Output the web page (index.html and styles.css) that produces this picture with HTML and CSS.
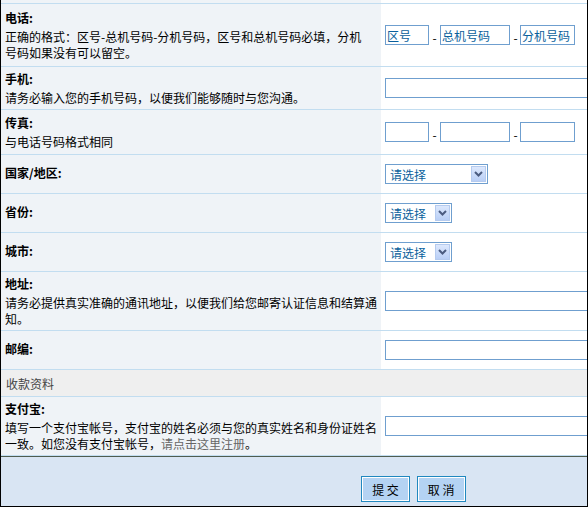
FILE: index.html
```html
<!DOCTYPE html>
<html lang="zh-CN">
<head>
  <meta charset="UTF-8">
  <title>会员资料</title>
  <link rel="stylesheet" href="styles.css">
</head>
<body>

  <div class="frame">
    <form id="profileForm">
      <table class="form-table">
        <colgroup>
          <col class="col-label">
          <col class="col-field">
        </colgroup>
        <tr class="row-cut"><td class="label"></td><td class="field"></td></tr>

        <!-- 联系方式 -->
        <tr class="h62">
          <td class="label">
            <b>电话:</b>
            <span class="tip">正确的格式：区号-总机号码-分机号码，区号和总机号码必填，分机<br>号码如果没有可以留空。</span>
          </td>
          <td class="field">
            <input class="tel-area" type="text" name="tel_area" value="区号"><span class="dash">-</span><input class="tel-main" type="text" name="tel_main" value="总机号码"><span class="dash">-</span><input class="tel-ext" type="text" name="tel_ext" value="分机号码">
          </td>
        </tr>
        <tr class="h42">
          <td class="label">
            <b>手机:</b>
            <span class="tip">请务必输入您的手机号码，以便我们能够随时与您沟通。</span>
          </td>
          <td class="field"><input class="wide" type="text" name="mobile"></td>
        </tr>
        <tr class="h44">
          <td class="label">
            <b>传真:</b>
            <span class="tip">与电话号码格式相同</span>
          </td>
          <td class="field">
            <input class="tel-area" type="text" name="fax_area"><span class="dash">-</span><input class="tel-main" type="text" name="fax_main"><span class="dash">-</span><input class="tel-ext" type="text" name="fax_ext">
          </td>
        </tr>

        <!-- 地区 -->
        <tr>
          <td class="label"><b>国家/地区:</b></td>
          <td class="field">
            <span class="pick pick-long">
              <select name="country"><option>请选择</option></select>
              <span class="pick-arrow"><svg width="9" height="6" viewBox="0 0 9 6"><path d="M1 1l3.5 3.5L8 1" fill="none" stroke="#4b5c80" stroke-width="2"/></svg></span>
            </span>
          </td>
        </tr>
        <tr>
          <td class="label"><b>省份:</b></td>
          <td class="field">
            <span class="pick">
              <select name="province"><option>请选择</option></select>
              <span class="pick-arrow"><svg width="9" height="6" viewBox="0 0 9 6"><path d="M1 1l3.5 3.5L8 1" fill="none" stroke="#4b5c80" stroke-width="2"/></svg></span>
            </span>
          </td>
        </tr>
        <tr>
          <td class="label"><b>城市:</b></td>
          <td class="field">
            <span class="pick">
              <select name="city"><option>请选择</option></select>
              <span class="pick-arrow"><svg width="9" height="6" viewBox="0 0 9 6"><path d="M1 1l3.5 3.5L8 1" fill="none" stroke="#4b5c80" stroke-width="2"/></svg></span>
            </span>
          </td>
        </tr>
        <tr class="h58">
          <td class="label">
            <b>地址:</b>
            <span class="tip">请务必提供真实准确的通讯地址，以便我们给您邮寄认证信息和结算通知。</span>
          </td>
          <td class="field"><input class="wide" type="text" name="address"></td>
        </tr>
        <tr>
          <td class="label"><b>邮编:</b></td>
          <td class="field"><input class="wide" type="text" name="zip"></td>
        </tr>

        <!-- 收款资料 -->
        <tr class="section">
          <td colspan="2">收款资料</td>
        </tr>
        <tr class="h58">
          <td class="label">
            <b>支付宝:</b>
            <span class="tip">填写一个支付宝帐号，支付宝的姓名必须与您的真实姓名和身份证姓名一致。如您没有支付宝帐号，<a href="#">请点击这里注册</a>。</span>
          </td>
          <td class="field"><input class="wide" type="text" name="alipay"></td>
        </tr>
      </table>

      <div class="actions">
        <button type="submit">提 交</button>
        <button type="reset">取 消</button>
      </div>
    </form>
  </div>

</body>
</html>
```

FILE: styles.css
```css
body { margin: 0; font-family: "SimSun", "Noto Sans CJK SC", sans-serif; font-size: 12px; color: #000; }
.frame { width: 586px; height: 506px; border: 1px solid #000; border-top: 0; overflow: hidden; background: #d9e5f3; }

.form-table { width: 586px; table-layout: fixed; border-spacing: 0; background: #fff; }
.col-label { width: 380px; }
.form-table td { height: 38px; padding: 0 4px; border-bottom: 1px solid #c2ddf0; vertical-align: middle; }
.form-table td.label { background: #eff3f7; padding-right: 2px; }
.form-table td.field { overflow: visible; white-space: nowrap; }

.row-cut td { height: 3px; }
.h62 td { height: 62px; }
.h42 td { height: 42px; }
.h44 td { height: 44px; }
.h58 td { height: 58px; }

.label b { display: block; line-height: 16px; margin-bottom: 3px; }
.label .tip { display: block; line-height: 16px; }
.label a { color: #666; text-decoration: none; }

.section td { height: 26px; background: #efefef; color: #444; padding-left: 5px; }

input { box-sizing: border-box; height: 20px; border: 1px solid #6f9fcf; padding: 0 1px; font: 12px "SimSun", "Noto Sans CJK SC", sans-serif; color: #0a5f9c; vertical-align: middle; }
.tel-area { width: 44px; }
.tel-main { width: 70px; }
.tel-ext { width: 55px; }
.wide { width: 230px; }
.dash { display: inline-block; width: 11px; text-align: center; vertical-align: -4px; line-height: 12px; }
.dash + .tel-ext { margin-left: -1px; }

/* select with a drawn arrow button */
.pick { position: relative; display: inline-block; vertical-align: middle; }
.pick select { appearance: none; box-sizing: border-box; width: 67px; height: 20px; border: 1px solid #6f9fcf; padding: 0 0 0 4px; background: #fff; font: 12px "SimSun", "Noto Sans CJK SC", sans-serif; color: #0a5f9c; display: block; }
.pick-long select { width: 103px; }
.pick-arrow { position: absolute; right: 2px; top: 2px; width: 15px; height: 16px; box-sizing: border-box; border: 1px solid #b5cbef; background: linear-gradient(#dce8fd, #b9cff6); display: flex; align-items: center; justify-content: center; pointer-events: none; }

.actions { border-top: 1px solid #4f5d4f; padding: 19px 0 0 360px; height: 30px; }
.actions button { width: 49px; height: 26px; margin-right: 4px; border: 1px solid #2088bf; box-shadow: inset 0 0 0 1px #fff; background: #b4d3f3; font: 12px "SimSun", "Noto Sans CJK SC", sans-serif; color: #000; padding: 0; }
```
